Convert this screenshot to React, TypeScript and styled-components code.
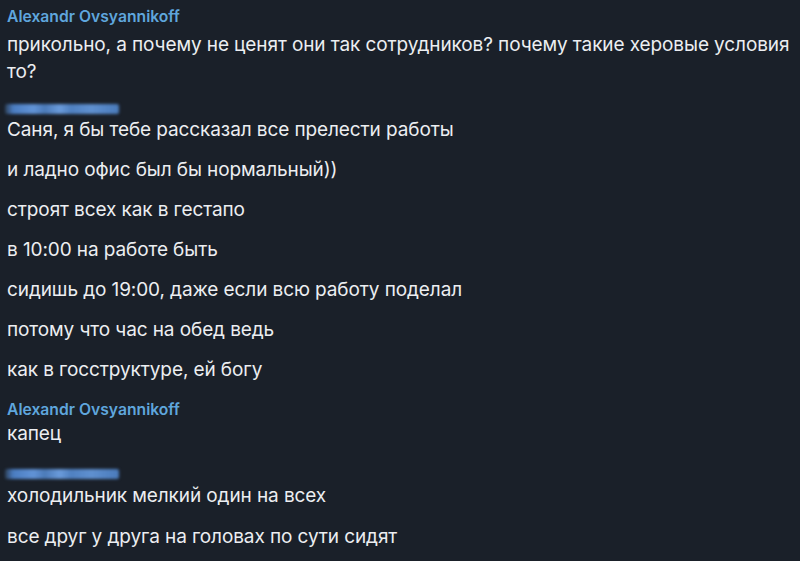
import React from "react";
import styled, { createGlobalStyle } from "styled-components";

const Global = createGlobalStyle`
  html, body { margin: 0; padding: 0; background: #1a2029; }
  body { width: 800px; height: 561px; overflow: hidden; }
`;

const Page = styled.div`
  width: 800px;
  height: 561px;
  background: #1a2029;
  padding: 7px 0 0 7px;
  box-sizing: border-box;
  font-family: Inter, "Noto Sans", sans-serif;
  color: #eceef1;
  display: flex;
  flex-direction: column;
`;

const Group = styled.div<{ $gap: number; $inner?: number }>`
  display: flex;
  flex-direction: column;
  gap: ${(p) => p.$inner ?? 13}px;
  margin-bottom: ${(p) => p.$gap}px;
`;

const Name = styled.div<{ $after: number }>`
  font-size: 15.7px;
  font-weight: 600;
  line-height: 20px;
  color: #5fa6dd;
  margin-bottom: ${(p) => p.$after}px;
`;

const BlurName = styled.div`
  height: 20px;
  box-sizing: border-box;
  padding-top: 5px;
  display: flex;
  align-items: center;
  margin-bottom: -13px;
`;

const BlurBar = styled.div`
  width: 114px;
  height: 10px;
  margin-left: -2px;
  border-radius: 2px;
  background: linear-gradient(
    90deg,
    rgba(90, 140, 200, 0.3) 0%,
    #4a7cc0 7%,
    #6193d6 25%,
    #4b7ab8 35%,
    #6a9bdb 48%,
    #4f80c0 58%,
    #5f90d0 75%,
    #4a7bbb 100%
  );
  filter: blur(1.4px);
`;

const Text = styled.div`
  font-size: 19px;
  line-height: 27px;
  letter-spacing: -0.1px;
  width: 790px;
`;

const App: React.FC = () => (
  <>
    <Global />
    <Page>
      <Group $gap={11}>
        <Name $after={-9}>Alexandr Ovsyannikoff</Name>
        <Text>
          прикольно, а почему не ценят они так сотрудников? почему такие херовые условия то?
        </Text>
      </Group>
      <Group $gap={17}>
        <BlurName>
          <BlurBar />
        </BlurName>
        <Text>Саня, я бы тебе рассказал все прелести работы</Text>
        <Text>и ладно офис был бы нормальный))</Text>
        <Text>строят всех как в гестапо</Text>
        <Text>в 10:00 на работе быть</Text>
        <Text>сидишь до 19:00, даже если всю работу поделал</Text>
        <Text>потому что час на обед ведь</Text>
        <Text>как в госструктуре, ей богу</Text>
      </Group>
      <Group $gap={14}>
        <Name $after={-13}>Alexandr Ovsyannikoff</Name>
        <Text>капец</Text>
      </Group>
      <Group $gap={0} $inner={14}>
        <BlurName>
          <BlurBar />
        </BlurName>
        <Text>холодильник мелкий один на всех</Text>
        <Text>все друг у друга на головах по сути сидят</Text>
      </Group>
    </Page>
  </>
);

export default App;
